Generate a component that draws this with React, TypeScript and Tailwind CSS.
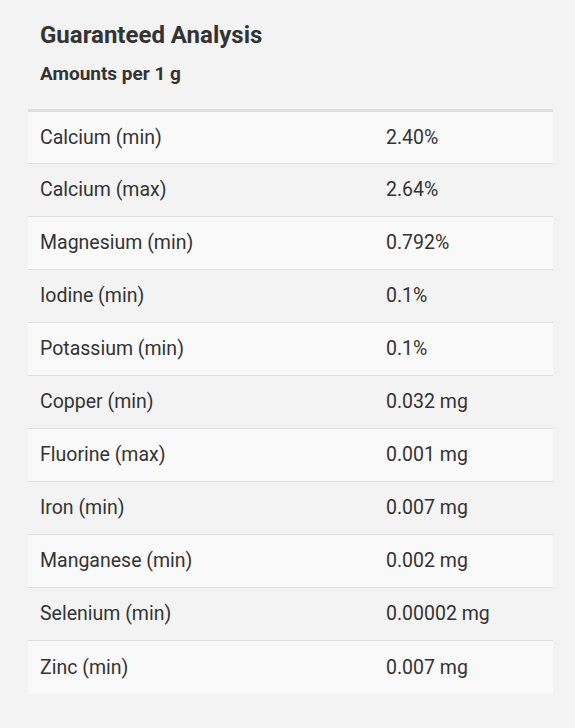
import React from "react";

const rows: [string, string][] = [
  ["Calcium (min)", "2.40%"],
  ["Calcium (max)", "2.64%"],
  ["Magnesium (min)", "0.792%"],
  ["Iodine (min)", "0.1%"],
  ["Potassium (min)", "0.1%"],
  ["Copper (min)", "0.032 mg"],
  ["Fluorine (max)", "0.001 mg"],
  ["Iron (min)", "0.007 mg"],
  ["Manganese (min)", "0.002 mg"],
  ["Selenium (min)", "0.00002 mg"],
  ["Zinc (min)", "0.007 mg"],
];

export default function App() {
  return (
    <div
      className="min-h-[728px] w-full bg-[#f3f3f3] text-[#333333] px-[28px] pt-[20px]"
      style={{ fontFamily: "Roboto, 'Liberation Sans', sans-serif" }}
    >
      <h2 className="px-[12px] text-[24px] font-bold leading-[30px]">Guaranteed Analysis</h2>
      <div className="px-[12px] mt-[12px] text-[19px] font-bold leading-[24px]">Amounts per 1 g</div>
      <table className="mt-[23px] w-[525px] border-collapse border-t-[3px] border-[#dddddd] text-[19.5px]">
        <tbody>
          {rows.map(([k, v], i) => (
            <tr
              key={k}
              className={
                (i % 2 === 0 ? "bg-[#f9f9f9]" : "bg-[#f3f3f3]") +
                (i > 0 ? " border-t border-[#dddddd]" : "")
              }
            >
              <td className="w-[346px] h-[53px] px-[12px] align-middle">{k}</td>
              <td className="h-[53px] px-[12px] align-middle">{v}</td>
            </tr>
          ))}
        </tbody>
      </table>
    </div>
  );
}
